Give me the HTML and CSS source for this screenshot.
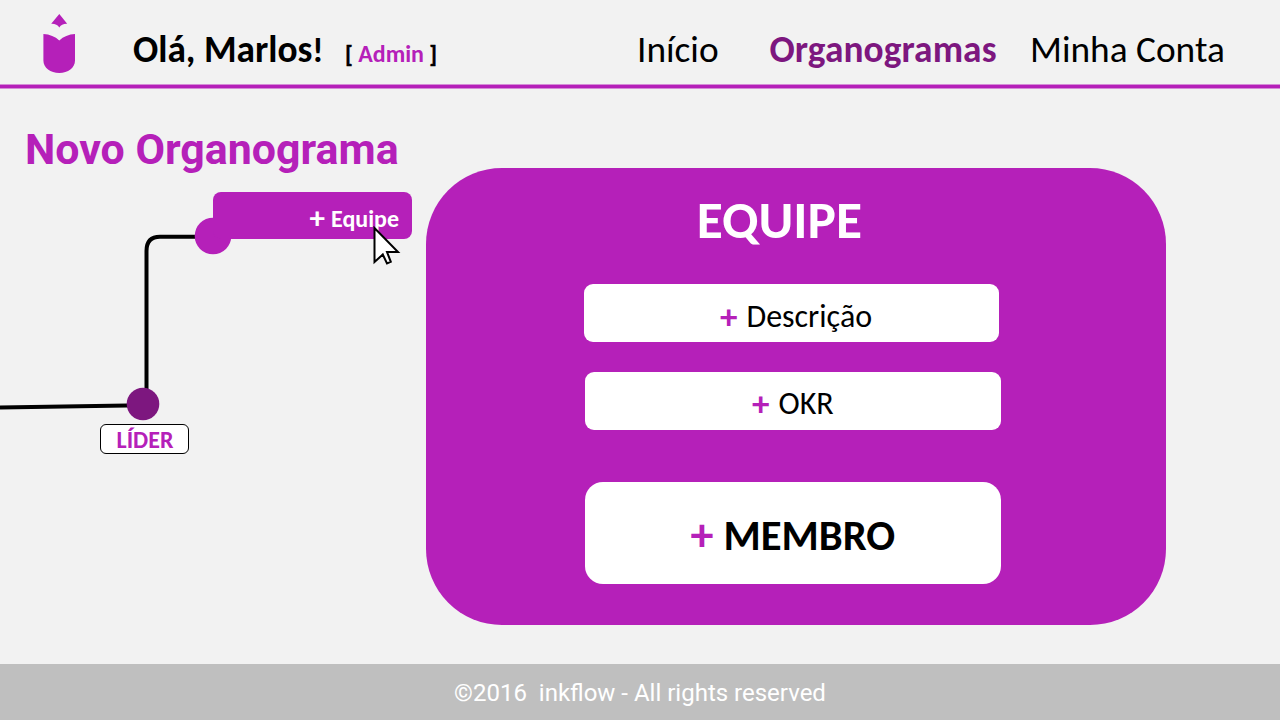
FILE: index.html
```html
<!DOCTYPE html>
<html lang="pt">
<head>
<meta charset="utf-8">
<title>inkflow - Novo Organograma</title>
<link rel="stylesheet" href="styles.css">
</head>
<body>
<header class="topbar">
  <svg class="logo" width="34" height="62" viewBox="0 0 34 62" aria-hidden="true">
    <path d="M17.300 2 L25.200 11.800 Q19.800 11.500 17.300 15.500 Q14.800 11.500 9.200 11.800 Z"/>
    <path d="M1.400 22 Q11 22.500 17.300 28.500 Q23.500 22.500 33 22 V48.500 C33 56 26 61 17.300 61 C8.500 61 1.400 56 1.400 48.500 Z"/>
  </svg>
  <div class="greeting">Olá, Marlos<span class="bang">!</span></div>
  <div class="role">[ <span class="role-name">Admin</span> ]</div>
  <nav class="menu">
    <a class="menu-item">Início</a>
    <a class="menu-item active">Organogramas</a>
    <a class="menu-item">Minha Conta</a>
  </nav>
</header>
<main class="content">
  <section class="chart">
    <h1 class="title">Novo Organograma</h1>
    <div class="canvas">
      <svg class="links" width="426" height="300" viewBox="0 180 426 300" aria-hidden="true">
        <path class="link" d="M0 407.500 L143 405.200"/>
        <path class="link" d="M146.500 404 V251 Q146.500 236.700 160 236.700 H213"/>
        <circle class="team-dot" cx="213" cy="236" r="18.300"/>
        <circle class="leader-dot" cx="143" cy="404" r="16.300"/>
      </svg>
      <div class="team-button"><span class="team-plus">+</span><span>Equipe</span></div>
      <div class="leader-label">LÍDER</div>
      <svg class="cursor" width="28" height="40" viewBox="0 0 28 40" aria-hidden="true">
        <path d="M1.500 2 V36 L9.800 28.500 L14 37.500 L17.800 35.800 L14 26 H25 Z"/>
      </svg>
    </div>
  </section>
  <section class="panel">
    <h2 class="panel-title">EQUIPE</h2>
    <div class="field description"><span class="plus">+</span><span>Descrição</span></div>
    <div class="field okr"><span class="plus">+</span><span>OKR</span></div>
    <div class="field member"><span class="plus">+</span><span>MEMBRO</span></div>
  </section>
</main>
<footer class="footer">©2016&nbsp; inkflow - All rights reserved</footer>
</body>
</html>
```

FILE: styles.css
```css
* { box-sizing: border-box; }
body {
  margin: 0;
  width: 1280px;
  height: 720px;
  overflow: hidden;
  display: flex;
  flex-direction: column;
  background: #f2f2f2;
  color: #000;
  font-family: Carlito, Calibri, "Liberation Sans", sans-serif;
}
.topbar {
  height: 88px;
  flex: none;
  display: flex;
  align-items: flex-start;
  border-bottom: 3px solid #b520b9;
  box-shadow: 0 1px 0 #d58cd7, inset 0 -1px 0 #d58cd7;
  white-space: nowrap;
}
.logo { margin: 12px 0 0 42px; fill: #b520b9; flex: none; }
.greeting {
  margin: 25px 0 0 57px;
  width: 212px;
  font-size: 37.33px;
  line-height: 48px;
  font-weight: 700;
}
.bang { font-size: 34.5px; }
.role {
  margin-top: 38px;
  width: 292px;
  font-size: 24px;
  line-height: 32px;
  font-weight: 700;
  -webkit-text-stroke: .4px #000;
}
.role-name { color: #b520b9; -webkit-text-stroke: 0; }
.menu { display: flex; margin-top: 25px; font-size: 37.33px; line-height: 48px; }
.menu-item:nth-child(1) { width: 132.500px; }
.menu-item:nth-child(2) { width: 260.500px; letter-spacing: .1px; }
.active { color: #7d177f; font-weight: 700; }

.content { flex: 1; display: flex; align-items: flex-start; }
.chart { width: 426px; }
.title {
  margin: 35px 0 0 25px;
  font: 700 42.900px/52px Roboto, sans-serif;
  color: #b520b9;
  white-space: nowrap;
}
.canvas { position: relative; height: 300px; margin-top: 5px; }
.links { display: block; }
.link { fill: none; stroke: #000; stroke-width: 4; }
.team-dot { fill: #b520b9; }
.leader-dot { fill: #7d177f; }
.team-button {
  position: absolute;
  left: 213px;
  top: 12px;
  width: 199px;
  height: 47px;
  padding: 11px 13px 0 0;
  border-radius: 8px;
  background: #b520b9;
  color: #fff;
  display: flex;
  justify-content: flex-end;
  font-size: 24px;
  line-height: 32px;
  font-weight: 700;
}
.team-plus { font-size: 31px; line-height: 28px; margin-right: 6px; }
.leader-label {
  position: absolute;
  left: 100px;
  top: 244px;
  width: 89px;
  height: 30px;
  padding-left: 1px;
  border: 1.500px solid #000;
  border-radius: 6px;
  background: #fff;
  color: #b520b9;
  font-size: 24px;
  line-height: 30px;
  font-weight: 700;
  text-align: center;
}
.cursor { position: absolute; left: 373px; top: 46px; fill: #fff; stroke: #000; stroke-width: 2; }
.panel {
  margin: 79.500px 0 0 .300px;
  width: 740px;
  height: 457px;
  border-radius: 76px;
  background: #b520b9;
  padding: 21px 0 0 157.500px;
}
.panel-title {
  margin: 0 0 0 113px;
  color: #fff;
  font-size: 53.33px;
  line-height: 62px;
  font-weight: 700;
}
.field {
  width: 415.500px;
  height: 58px;
  border-radius: 9px;
  background: #fff;
  display: flex;
  justify-content: center;
  font-size: 32px;
  line-height: 64px;
}
.plus { color: #b520b9; font-weight: 700; font-size: 35px; margin-right: 9px; }
.description { margin-top: 33.500px; padding-left: 9px; line-height: 66px; }
.okr { margin: 29.500px 0 0 1.300px; }
.member {
  height: 102px;
  margin: 52px 0 0 1.300px;
  border-radius: 18px;
  font-size: 42.67px;
  line-height: 107px;
  font-weight: 700;
}
.member .plus { font-size: 46px; margin-right: 10px; }
.footer {
  flex: none;
  height: 56px;
  background: #bfbfbf;
  color: #fff;
  font: 24px/58px Roboto, sans-serif;
  text-align: center;
}
```
